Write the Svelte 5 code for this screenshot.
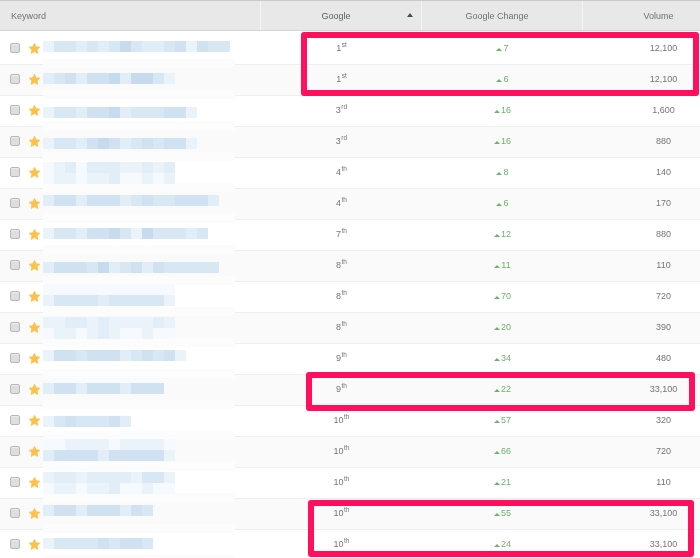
<script>
  const columns = ["Google", "Google Change", "Volume"];

  // bars: [offset from the row centre, shade digits for each mosaic block]
  const rows = [
    { rank: 1, suffix: "st", change: 7, volume: "12,100", bars: [[-8, "13323235322341433"]] },
    { rank: 1, suffix: "st", change: 6, volume: "12,100", bars: [[-7, "234244525531"]] },
    { rank: 3, suffix: "rd", change: 16, volume: "1,600", bars: [[-4, "13324452333441"]] },
    { rank: 3, suffix: "rd", change: 16, volume: "880", bars: [[-4, "13324542343441"]] },
    { rank: 4, suffix: "th", change: 8, volume: "140", bars: [[-11, "012022211212"], [0, "011011200101"]] },
    { rank: 4, suffix: "th", change: 6, volume: "170", bars: [[-9, "2442444234334442"]] },
    { rank: 7, suffix: "th", change: 12, volume: "880", bars: [[-7, "133244531533323"]] },
    { rank: 8, suffix: "th", change: 11, volume: "110", bars: [[-4, "2444352342433333"]] },
    { rank: 8, suffix: "th", change: 70, volume: "720", bars: [[-13, "000000000000"], [-2, "133332333331"]] },
    { rank: 8, suffix: "th", change: 20, volume: "390", bars: [[-11, "112212111121"], [0, "011012100100"]] },
    { rank: 9, suffix: "th", change: 34, volume: "480", bars: [[-9, "1443444234341"]] },
    { rank: 9, suffix: "th", change: 22, volume: "33,100", bars: [[-7, "24424442444"]] },
    { rank: 10, suffix: "th", change: 57, volume: "320", bars: [[-5, "13433342"]] },
    { rank: 10, suffix: "th", change: 66, volume: "720", bars: [[-13, "001111011110"], [-2, "244442444441"]] },
    { rank: 10, suffix: "th", change: 21, volume: "110", bars: [[-11, "122122221331"], [0, "011011200100"]] },
    { rank: 10, suffix: "th", change: 55, volume: "33,100", bars: [[-9, "2442444243"]] },
    { rank: 10, suffix: "th", change: 24, volume: "33,100", bars: [[-7, "1333343443"]] },
  ];

  const shades = ["#f6f9fd", "#ebf3fa", "#e1edf7", "#d8e7f4", "#d0e2f1", "#c6dbee"];
</script>

<div class="sheet">
  <div class="table">
    <div class="head">
      <div class="th keyword-head">Keyword</div>
      {#each columns as name, i}
        <div class="th" class:sorted={i === 0}>
          <span>{name}</span>
          {#if i === 0}
            <i class="sort"></i>
          {/if}
        </div>
      {/each}
    </div>

    {#each rows as row}
      <div class="row">
        <div class="keyword">
          <span class="check"></span>
          <svg class="star" viewBox="0 0 24 24" aria-hidden="true">
            <path d="M12 2.5l2.9 6.3 6.9.8-5.1 4.7 1.4 6.8-6.1-3.4-6.1 3.4 1.4-6.8-5.1-4.7 6.9-.8z" />
          </svg>
          {#each row.bars as bar}
            <div class="bar" style="top: calc(50% + {bar[0]}px)">
              {#each bar[1] as digit}
                <span style="background: {shades[digit]}"></span>
              {/each}
            </div>
          {/each}
        </div>
        <div class="cell">{row.rank}<sup>{row.suffix}</sup></div>
        <div class="cell up"><i class="arrow"></i>{row.change}</div>
        <div class="cell">{row.volume}</div>
      </div>
    {/each}
  </div>

  <div class="mark first"></div>
  <div class="mark second"></div>
  <div class="mark third"></div>
</div>

<style>
  :global(body) {
    background: #fff;
  }

  .sheet {
    position: relative;
    width: 700px;
    height: 558px;
    overflow: hidden;
    font-family: "Liberation Sans", Arial, sans-serif;
    font-size: 9px;
    color: #747474;
    filter: blur(0.35px);
  }

  .table {
    width: 744px;
  }

  .head,
  .row {
    display: grid;
    grid-template-columns: 261px 161px 161px 161px;
  }

  .head {
    grid-template-columns: 260px 161px 161px 162px;
    height: 31px;
    box-sizing: border-box;
    background: #e8e8e8;
    border-top: 1px solid #c9c9c9;
    border-bottom: 1px solid #d4d4d4;
    color: #707070;
  }

  .th {
    display: flex;
    align-items: center;
    justify-content: center;
    padding-right: 10px;
    border-left: 1px solid #f4f4f4;
    position: relative;
  }

  .keyword-head {
    justify-content: flex-start;
    padding-left: 11px;
    border-left: 0;
  }

  .sorted {
    color: #5c5c5c;
  }

  .sort {
    position: absolute;
    right: 8px;
    top: 12px;
    border-left: 3px solid transparent;
    border-right: 3px solid transparent;
    border-bottom: 4px solid #4a4a4a;
  }

  .row {
    height: 31px;
    box-sizing: border-box;
    border-bottom: 1px solid #eee;
    background: #fff;
  }

  .row:nth-child(odd) {
    background: #fafafa;
  }

  .row:nth-child(2) {
    height: 34px;
    padding-top: 3px;
  }

  .keyword {
    position: relative;
    display: flex;
    align-items: center;
    padding-left: 10px;
    padding-bottom: 2px;
  }

  .keyword::after {
    content: "";
    position: absolute;
    z-index: 1;
    left: 43px;
    width: 192px;
    height: 9px;
    bottom: -4px;
    background: #fcfcfc;
  }

  .check {
    box-sizing: border-box;
    width: 10px;
    height: 10px;
    border: 1px solid #b8b8b8;
    border-radius: 2px;
    background: #dedede;
    box-shadow: inset 0 1px 0 #ececec;
  }

  .star {
    width: 13px;
    height: 13px;
    margin-left: 8px;
  }

  .star path {
    fill: #fdc14a;
    stroke: #fdc14a;
    stroke-width: 1.5;
    stroke-linejoin: round;
  }

  .bar {
    position: absolute;
    z-index: 2;
    left: 43px;
    display: flex;
    height: 11px;
  }

  .bar span {
    width: 11px;
  }

  .cell {
    display: flex;
    align-items: center;
    justify-content: center;
    padding-bottom: 2px;
  }

  sup {
    font-size: 6.5px;
    line-height: 1;
    align-self: center;
    margin-top: -6px;
    margin-left: 0.5px;
  }

  .up {
    color: #6cb36c;
  }

  .arrow {
    margin-right: 1px;
    border-left: 3px solid transparent;
    border-right: 3px solid transparent;
    border-bottom: 3px solid #6cb36c;
    margin-top: 2px;
  }

  .mark {
    position: absolute;
    box-sizing: border-box;
    border: 6px solid #ff0f5c;
    border-radius: 3px;
  }

  .first {
    left: 301px;
    top: 32px;
    width: 398px;
    height: 64px;
  }

  .second {
    left: 306px;
    top: 372px;
    width: 389px;
    height: 39px;
  }

  .third {
    left: 308px;
    top: 500px;
    width: 386px;
    height: 57px;
  }
</style>
